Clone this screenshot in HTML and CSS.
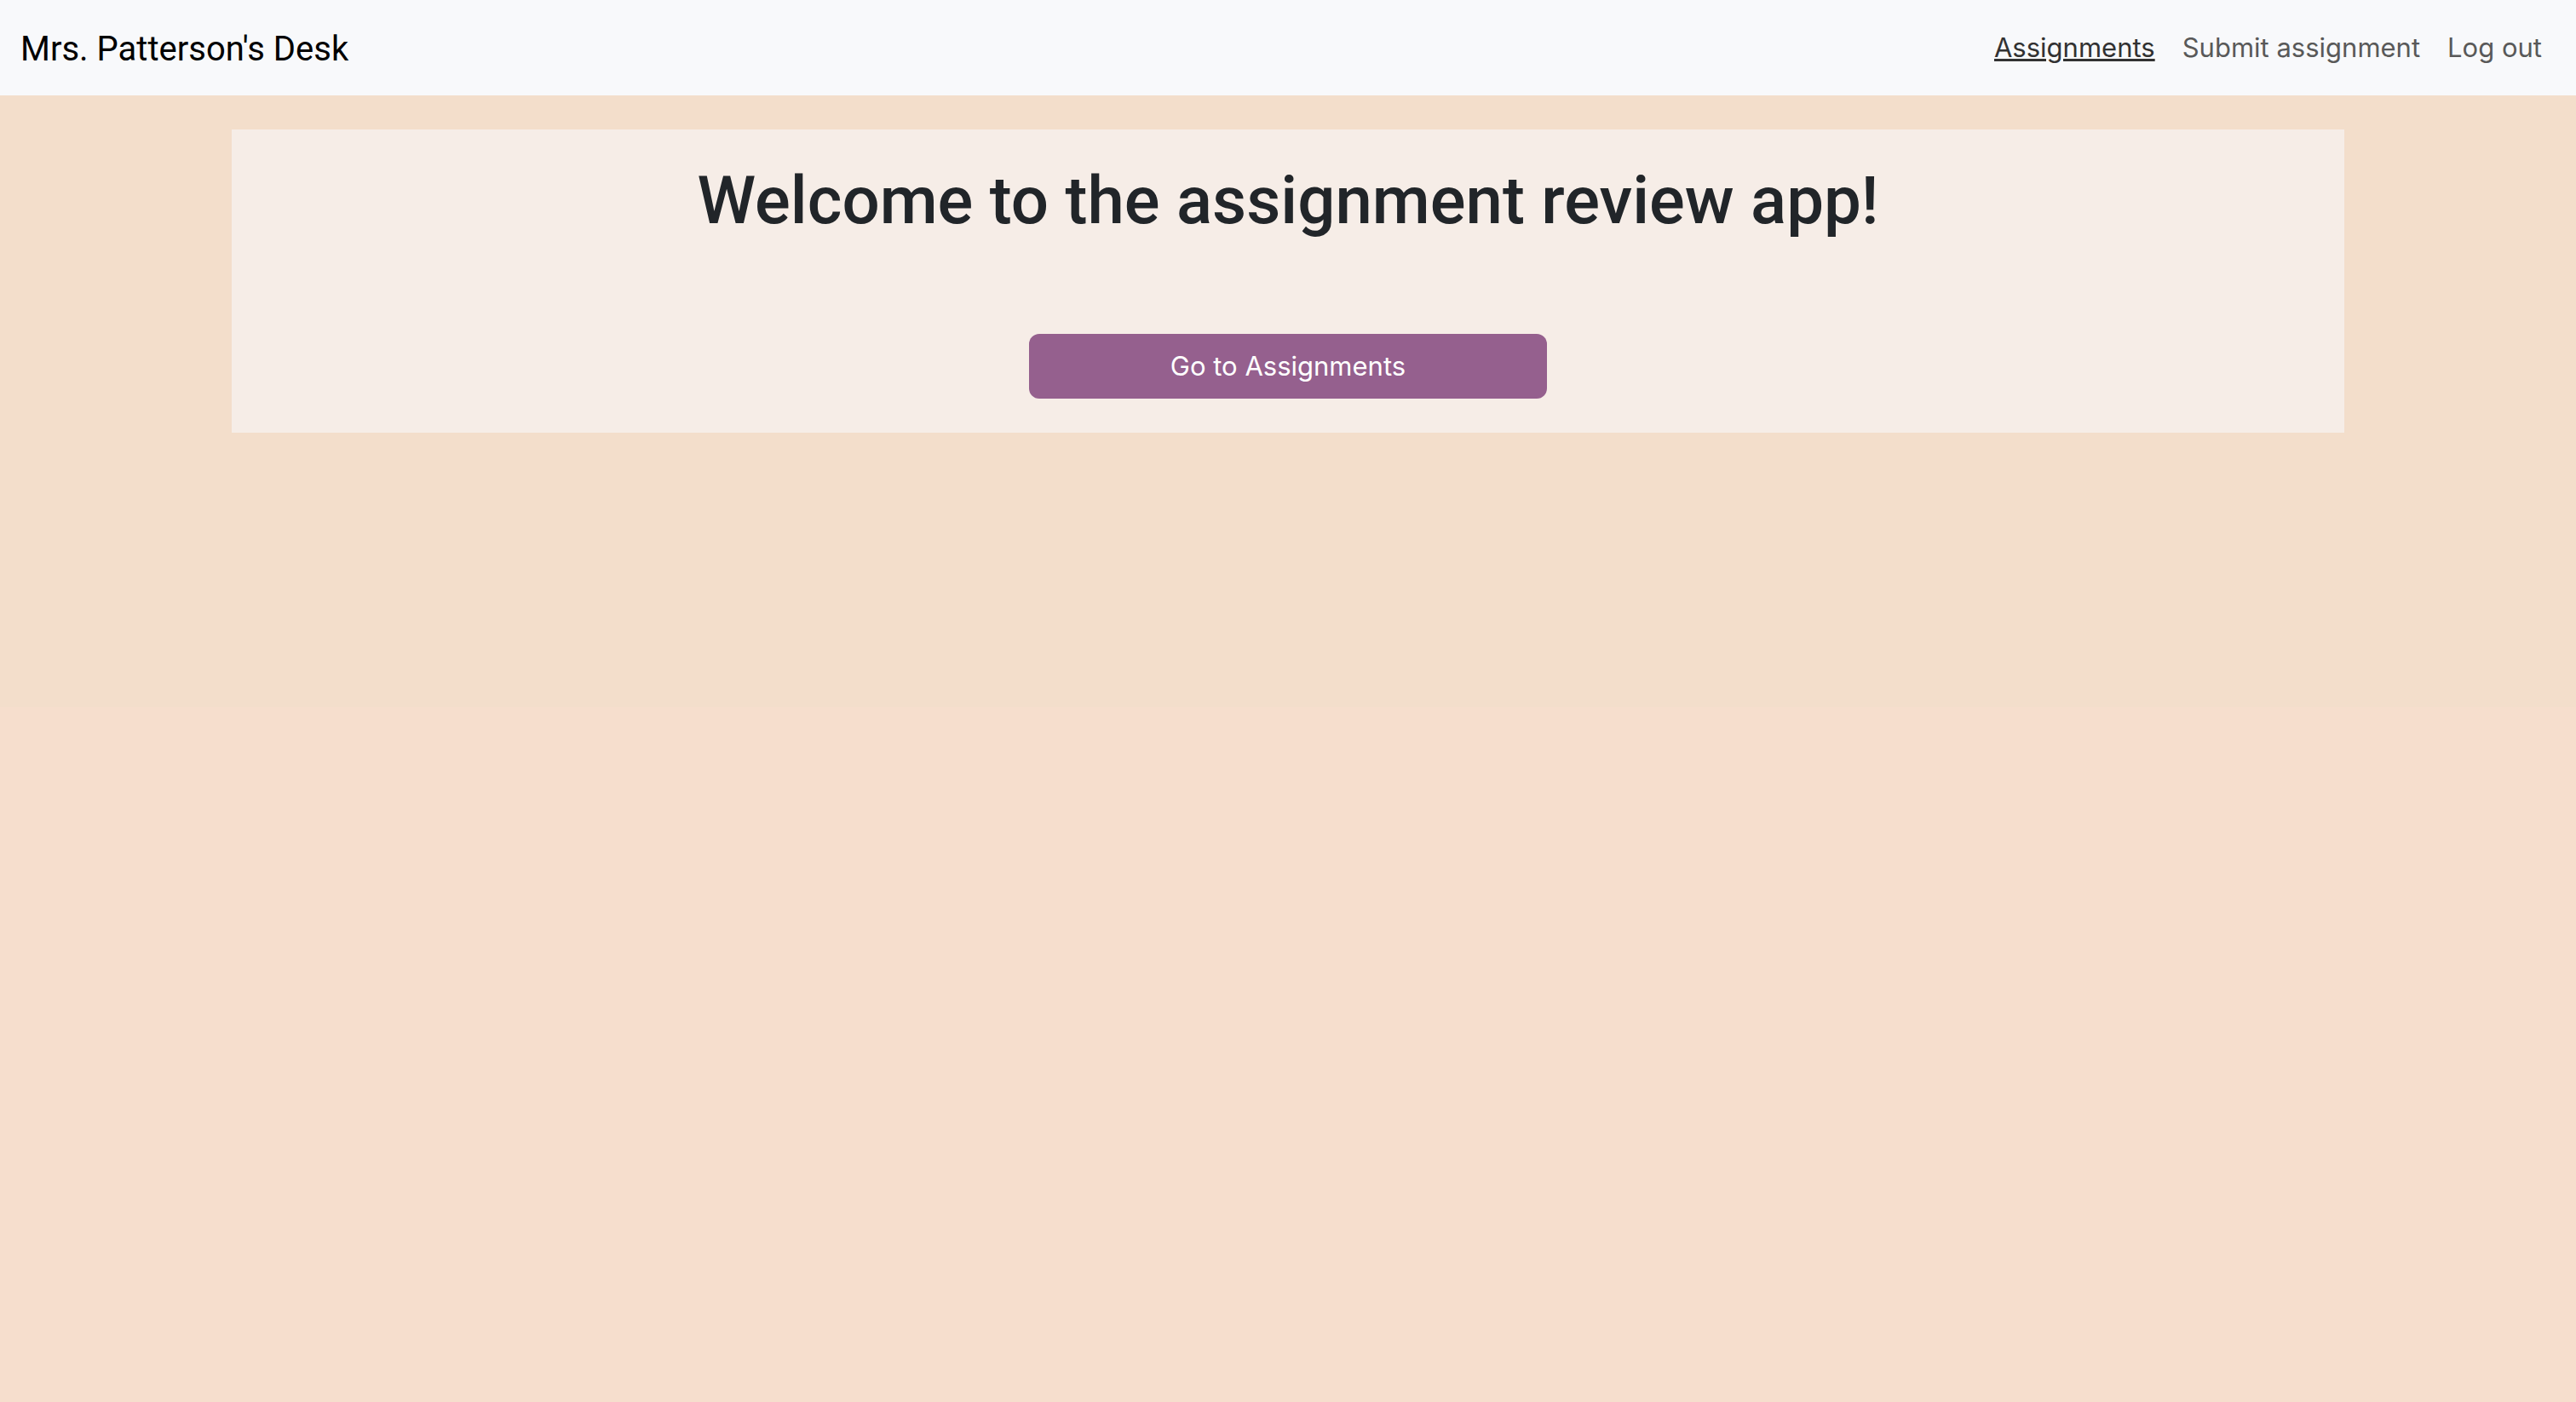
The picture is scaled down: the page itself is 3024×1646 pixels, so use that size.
FILE: index.html
```html
<!DOCTYPE html>
<html lang="en">
<head>
<meta charset="utf-8">
<meta name="viewport" content="width=device-width, initial-scale=1">
<title>Mrs. Patterson's Desk</title>
<link rel="stylesheet" href="styles.css">
</head>
<body>
<div class="page">
  <header class="navbar">
    <a class="brand" href="#">Mrs. Patterson's Desk</a>
    <nav class="nav">
      <a class="nav-link active" href="#">Assignments</a>
      <a class="nav-link" href="#">Submit assignment</a>
      <a class="nav-link" href="#">Log out</a>
    </nav>
  </header>
  <main class="welcome">
    <h1 class="title">Welcome to the assignment review app!</h1>
    <button class="button" type="button">Go to Assignments</button>
  </main>
</div>
</body>
</html>
```

FILE: styles.css
```css
* {
  box-sizing: border-box;
}

body {
  margin: 0;
  background: #f6decd;
  color: #212529;
  font-family: Inter, "Liberation Sans", sans-serif;
  font-size: 31px;
  line-height: 48px;
}

.page {
  min-height: 830px;
  background: #f3decb;
}

.navbar {
  display: flex;
  align-items: center;
  justify-content: space-between;
  padding: 16px 24px;
  background: #f8f9fb;
}

.brand {
  padding: 12px 0 8px;
  color: #000;
  font-family: Roboto, Inter, sans-serif;
  font-size: 40px;
  line-height: 60px;
  text-decoration: none;
}

.nav {
  display: flex;
}

.nav-link {
  padding: 16px;
  color: #595959;
  text-decoration: none;
}

.nav-link.active {
  color: #323232;
  text-decoration: underline;
  text-decoration-thickness: 3px;
}

.welcome {
  display: flex;
  flex-direction: column;
  align-items: center;
  gap: 108px;
  width: 82%;
  margin: 40px auto;
  padding: 36px 40px 40px;
  background: #f6ede7;
}

.title {
  margin: 0;
  font-family: Roboto, Inter, sans-serif;
  font-size: 78px;
  font-weight: 500;
  line-height: 96px;
}

.button {
  width: 608px;
  max-width: 100%;
  padding: 14px 24px;
  border: 0;
  border-radius: 12px;
  background: #95608e;
  color: #fff;
  font: inherit;
}
```
